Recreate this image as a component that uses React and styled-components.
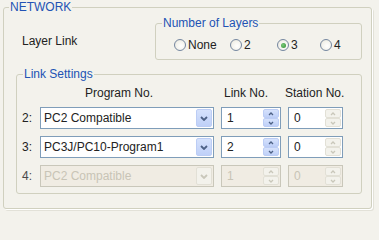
import React from 'react';
import styled, { createGlobalStyle } from 'styled-components';

const Global = createGlobalStyle`
  html, body { margin: 0; padding: 0; background: #F3F2EC; }
  body {
    font-family: "Liberation Sans", Arial, sans-serif;
    font-size: 12px;
    color: #222222;
    width: 379px;
    height: 214px;
    overflow: hidden;
  }
`;

const Page = styled.div`
  padding-left: 3px;
`;

const Group = styled.fieldset`
  margin: 0;
  padding: 0;
  min-width: 0;
  box-sizing: border-box;
  width: ${p => p.$w}px;
  border: 1px solid #D0D0BF;
  border-radius: 3px;
  box-shadow: ${p => (p.$outer ? '1px 1px 0 #FFFFFF, 2px 2px 0 #E2E1D8' : 'none')};
  margin-top: ${p => p.$mt || 0}px;
`;

const Legend = styled.legend`
  margin-left: ${p => p.$off}px;
  padding: 0 1px;
  height: 14px;
  line-height: 14px;
  font-size: 12px;
  color: #2252B4;
`;

const OuterBody = styled.div`
  padding: 2px 9px 14px 12px;
`;

const TopRow = styled.div`
  display: flex;
  justify-content: space-between;
  align-items: flex-start;
`;

const FieldLabel = styled.span`
  margin: 18px 0 0 6px;
  line-height: 14px;
`;

const RadioRow = styled.div`
  display: grid;
  grid-template-columns: 56px 47px 43px auto;
  padding: 8px 0 7px 18px;
`;

const RadioItem = styled.label`
  display: flex;
  align-items: center;
  gap: 2px;
  height: 14px;
  line-height: 14px;
`;

const RadioCircle = styled.span`
  width: 12px;
  height: 12px;
  box-sizing: border-box;
  border-radius: 50%;
  border: 1px solid #7587A0;
  background: radial-gradient(circle at 60% 60%, #FFFFFF 0%, #F2F1EA 60%, #DCDAD0 100%);
  display: flex;
  align-items: center;
  justify-content: center;
  &::after {
    content: '';
    display: ${p => (p.$checked ? 'block' : 'none')};
    width: 5px;
    height: 5px;
    border-radius: 50%;
    background: radial-gradient(circle at 40% 40%, #7CCB7C, #2E8B2E);
  }
`;

const SettingsGrid = styled.div`
  display: grid;
  grid-template-columns: 11px 174px 60px 55px;
  column-gap: 7px;
  row-gap: 7px;
  padding: 5px 0 6px 5px;
`;

const HeadCell = styled.div`
  height: 14px;
  line-height: 14px;
  white-space: nowrap;
  margin-left: ${p => p.$ml || 0}px;
`;

const RowNum = styled.div`
  height: 22px;
  line-height: 22px;
  color: ${p => (p.$disabled ? '#4a4a4a' : '#222222')};
`;

const Frame = styled.div`
  height: 22px;
  box-sizing: border-box;
  border: 1px solid ${p => (p.$disabled ? '#C9C7BA' : '#7F9DB9')};
  background: ${p => (p.$disabled ? '#F0ECE3' : '#FFFFFF')};
  display: flex;
  align-items: stretch;
  padding: 1px;
`;

const FrameText = styled.span`
  flex: 1;
  padding-left: ${p => p.$pl}px;
  line-height: 18px;
  white-space: nowrap;
  overflow: hidden;
  color: ${p => (p.$disabled ? '#C8C4B6' : '#222222')};
`;

const DropButton = styled.span`
  width: 16px;
  box-sizing: border-box;
  border-radius: 2px;
  border: 1px solid ${p => (p.$disabled ? '#E2E0D6' : '#BCCDF5')};
  background: ${p => (p.$disabled
    ? '#F3F2EC'
    : 'linear-gradient(#D6E2FC, #BFD0F8)')};
  display: flex;
  align-items: center;
  justify-content: center;
  color: ${p => (p.$disabled ? '#C9C7BA' : '#4D6185')};
`;

const SpinColumn = styled.span`
  width: 16px;
  display: flex;
  flex-direction: column;
`;

const SpinButton = styled.span`
  flex: 1;
  box-sizing: border-box;
  border-radius: 2px;
  border: 1px solid ${p => (p.$active ? '#BCCDF5' : '#E2E0D6')};
  background: ${p => (p.$active ? 'linear-gradient(#D6E2FC, #BFD0F8)' : '#F3F2EC')};
  display: flex;
  align-items: center;
  justify-content: center;
  color: ${p => (p.$active ? '#4D6185' : '#C9C7BA')};
`;

const ChevronDown = () => (
  <svg width="8" height="5" viewBox="0 0 8 5">
    <path d="M1 1 L4 4 L7 1" fill="none" stroke="currentColor" strokeWidth="1.8" />
  </svg>
);

const SmallChevron = ({ up }) => (
  <svg width="6" height="4" viewBox="0 0 6 4">
    <path d={up ? 'M1 3 L3 1 L5 3' : 'M1 1 L3 3 L5 1'} fill="none" stroke="currentColor" strokeWidth="1.3" />
  </svg>
);

const Combo = ({ value, disabled }) => (
  <Frame $disabled={disabled}>
    <FrameText $pl={2} $disabled={disabled}>{value}</FrameText>
    <DropButton $disabled={disabled}><ChevronDown /></DropButton>
  </Frame>
);

const Spin = ({ value, disabled, active }) => (
  <Frame $disabled={disabled}>
    <FrameText $pl={4} $disabled={disabled}>{value}</FrameText>
    <SpinColumn>
      <SpinButton $active={active}><SmallChevron up /></SpinButton>
      <SpinButton $active={active}><SmallChevron /></SpinButton>
    </SpinColumn>
  </Frame>
);

const Radio = ({ label, checked }) => (
  <RadioItem>
    <RadioCircle $checked={checked} />
    <span>{label}</span>
  </RadioItem>
);

const rows = [
  { n: '2:', program: 'PC2 Compatible', link: '1', station: '0' },
  { n: '3:', program: 'PC3J/PC10-Program1', link: '2', station: '0' },
  { n: '4:', program: 'PC2 Compatible', link: '1', station: '0', disabled: true },
];

export default function App() {
  return (
    <Page>
      <Global />
      <Group $w={369} $outer>
        <Legend $off={5}>NETWORK</Legend>
        <OuterBody>
          <TopRow>
            <FieldLabel>Layer Link</FieldLabel>
            <Group $w={207}>
              <Legend $off={6}>Number of Layers</Legend>
              <RadioRow>
                <Radio label="None" />
                <Radio label="2" />
                <Radio label="3" checked />
                <Radio label="4" />
              </RadioRow>
            </Group>
          </TopRow>
          <Group $w={346} $mt={7}>
            <Legend $off={6}>Link Settings</Legend>
            <SettingsGrid>
              <HeadCell />
              <HeadCell $ml={45}>Program No.</HeadCell>
              <HeadCell $ml={3}>Link No.</HeadCell>
              <HeadCell $ml={-3}>Station No.</HeadCell>
              {rows.map(r => (
                <React.Fragment key={r.n}>
                  <RowNum $disabled={r.disabled}>{r.n}</RowNum>
                  <Combo value={r.program} disabled={r.disabled} />
                  <Spin value={r.link} disabled={r.disabled} active={!r.disabled} />
                  <Spin value={r.station} disabled={r.disabled} active={false} />
                </React.Fragment>
              ))}
            </SettingsGrid>
          </Group>
        </OuterBody>
      </Group>
    </Page>
  );
}
